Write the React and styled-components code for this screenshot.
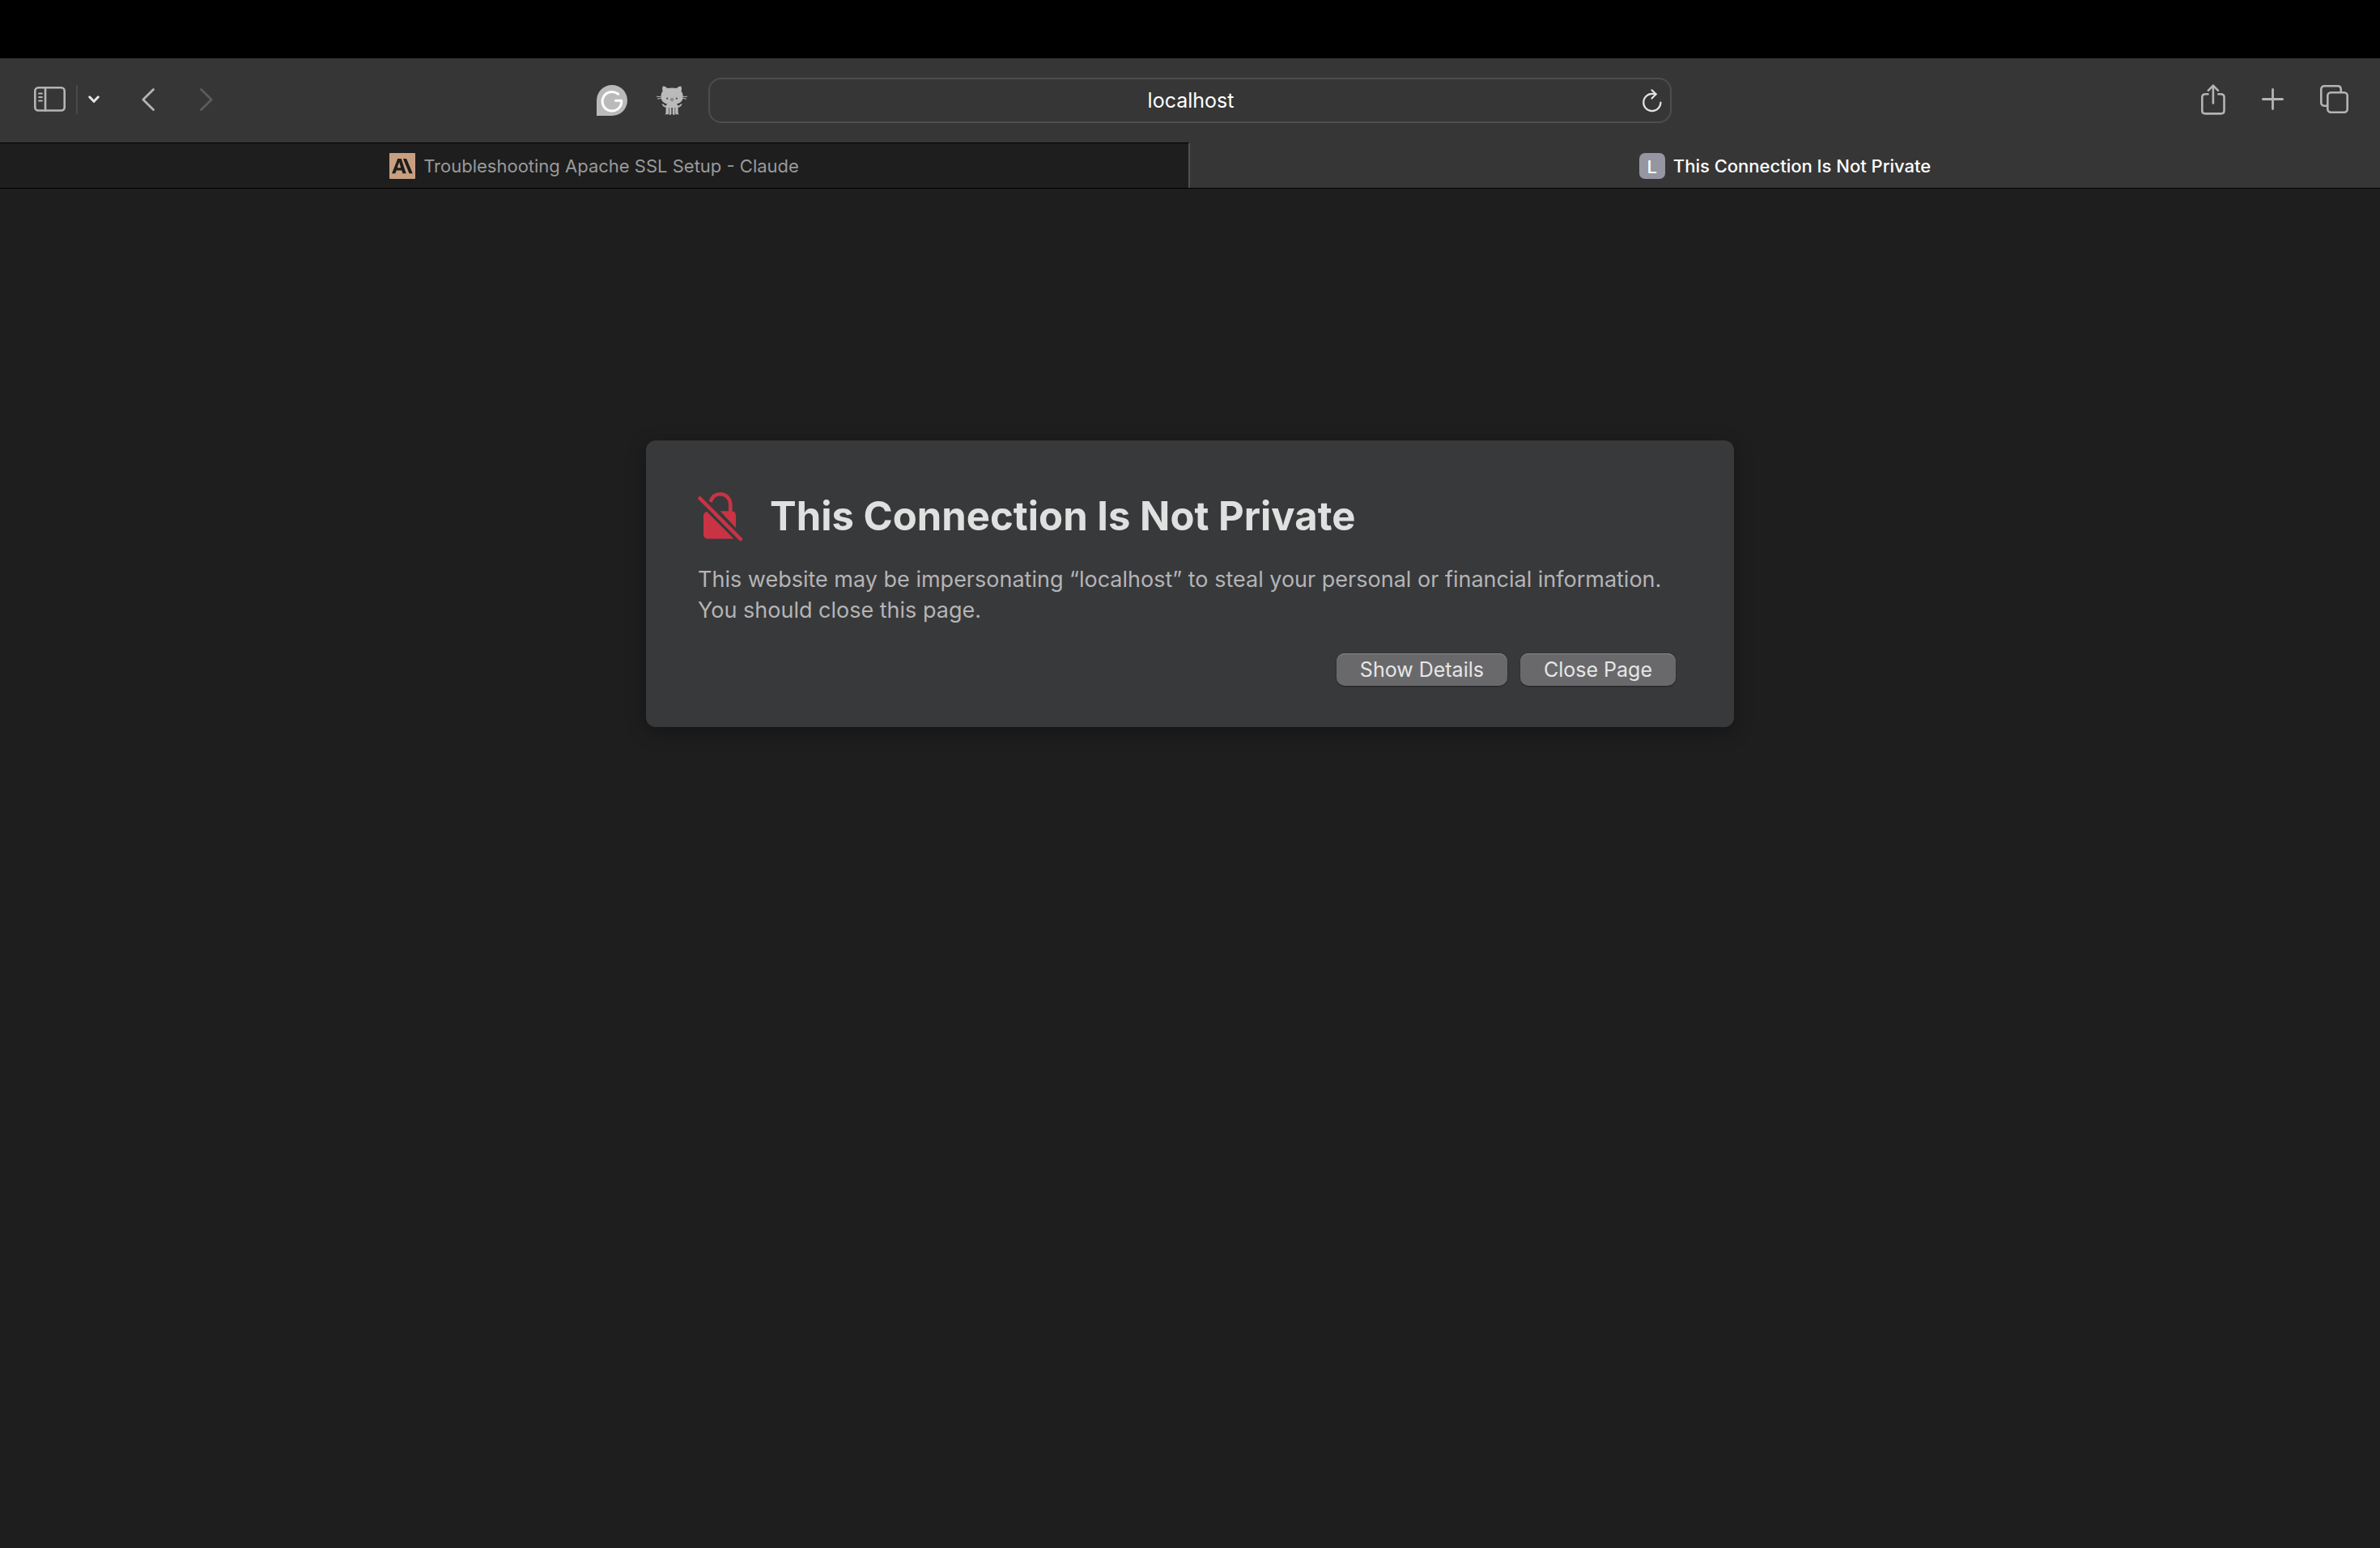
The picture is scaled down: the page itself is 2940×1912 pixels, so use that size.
import React from "react";
import styled, { createGlobalStyle } from "styled-components";

const GlobalStyle = createGlobalStyle`
  *, *::before, *::after { box-sizing: border-box; }
  body {
    margin: 0;
    background: #1e1e1e;
    font-family: Inter, "Liberation Sans", sans-serif;
  }
  button, input { font: inherit; color: inherit; }
`;

const Window = styled.div`
  min-height: 100vh;
  display: flex;
  flex-direction: column;
  background: #1e1e1e;
`;

const ScreenNotch = styled.div`
  height: 72px;
  background: #000;
`;

const Toolbar = styled.header`
  display: grid;
  grid-template-columns: 1fr minmax(0, 1190px) 1fr;
  align-items: center;
  height: 104px;
  background: #363636;
`;

const ToolbarStart = styled.div`
  display: flex;
  align-items: center;
  padding-left: 42px;
`;

const ToolGroup = styled.div`
  display: flex;
  align-items: center;
  justify-content: flex-end;
  flex: ${(p) => (p.$fill ? 1 : "none")};
  gap: ${(p) => p.$gap || 0}px;
  margin-right: ${(p) => p.$after || 0}px;
  padding-bottom: ${(p) => (p.$fill ? 0 : 3)}px;
`;

const IconButton = styled.button`
  display: flex;
  padding: 0;
  border: 0;
  background: none;
  color: ${(p) => p.$tone || "#b4b4b4"};

  svg { display: block; overflow: visible; }
`;

const Divider = styled.span`
  width: 2px;
  height: 36px;
  background: #494949;
`;

const AddressBar = styled.div`
  display: flex;
  align-items: center;
  height: 56px;
  padding: 0 10px;
  border: 2px solid #4d4d4d;
  border-radius: 16px;
`;

const AddressInput = styled.input`
  flex: 1;
  min-width: 0;
  height: 48px;
  padding: 0 0 0 26px;
  border: 0;
  outline: 0;
  background: transparent;
  color: #fff;
  font-size: 25px;
  text-align: center;
`;

const TabBar = styled.nav`
  display: grid;
  grid-template-columns: 1fr 1fr;
  height: 57px;
  border-bottom: 1px solid #000;
`;

const Tab = styled.button`
  display: flex;
  align-items: center;
  justify-content: center;
  gap: 10px;
  padding: 0;
  border: 0;
  border-top: 1px solid ${(p) => (p.$active ? "#363636" : "#000")};
  border-right: ${(p) => (p.$active ? "0" : "2px solid #505050")};
  background: ${(p) => (p.$active ? "#363636" : "#1e1e1e")};
  color: ${(p) => (p.$active ? "#fff" : "#9a9a9a")};
  font-size: 22px;
  font-weight: ${(p) => (p.$active ? 500 : 400)};
  line-height: 32px;

  svg { display: block; }
`;

const LetterIcon = styled.span`
  width: 32px;
  height: 32px;
  border-radius: 7px;
  background: #9696a2;
  color: #fff;
  font-size: 22px;
  font-weight: 500;
  line-height: 34px;
  text-align: center;
`;

const Page = styled.main`
  flex: 1;
  display: flex;
  align-items: flex-start;
  justify-content: center;
  padding: 311px 24px 24px;
`;

const Card = styled.section`
  width: 100%;
  max-width: 1344px;
  padding: 62px 72px 51px 64px;
  border-radius: 12px;
  background: #38393b;
  box-shadow: 0 6px 24px rgba(0, 0, 0, 0.3);
`;

const CardHeader = styled.div`
  display: flex;
  align-items: center;
  gap: 32px;

  svg { display: block; }
`;

const Title = styled.h1`
  margin: 0;
  color: #dfe0e0;
  font-size: 49px;
  font-weight: 700;
  line-height: 64px;
`;

const Message = styled.p`
  margin: 27px 0 0;
  color: #b4b4b6;
  font-size: 27px;
  line-height: 38px;
`;

const Actions = styled.div`
  display: flex;
  justify-content: flex-end;
  gap: 16px;
  margin-top: 34px;
`;

const PushButton = styled.button`
  height: 40px;
  padding: 0 29px;
  border: 0;
  border-radius: 10px;
  background: #69696b;
  box-shadow: inset 0 1px 0 #88888a, 0 1px 2px rgba(0, 0, 0, 0.4);
  color: #e6e6e6;
  font-size: 25px;
  line-height: 40px;
`;

const line = { fill: "none", stroke: "currentColor", strokeLinecap: "round", strokeLinejoin: "round" };

const SidebarIcon = () => (
  <svg width="39" height="31" viewBox="0 0 39 31" {...line} strokeWidth="2.6">
    <rect x="1.3" y="1.3" width="36.4" height="28.2" rx="4" />
    <path d="M14 1.5v28" />
    <path d="M6 8.5h4M6 13h4M6 17.5h4" strokeWidth="1.8" />
  </svg>
);

const MenuChevron = () => (
  <svg width="14" height="10" viewBox="0 0 14 10" {...line} strokeWidth="3">
    <path d="M1.7 1.8 7 7.3l5.300-5.500" />
  </svg>
);

const BackIcon = () => (
  <svg width="16" height="28" viewBox="0 0 16 28" {...line} strokeWidth="2.8">
    <path d="M14.500 1.500 1.800 14l12.700 12.500" />
  </svg>
);

const ForwardIcon = () => (
  <svg width="16" height="28" viewBox="0 0 16 28" {...line} strokeWidth="2.8">
    <path d="M1.500 1.500 14.200 14 1.500 26.500" />
  </svg>
);

const GrammarIcon = () => (
  <svg width="38" height="38" viewBox="0 0 38 38">
    <path d="M19 0a19 19 0 1 1 0 38H0V19A19 19 0 0 1 19 0z" fill="#bababa" />
    <path d="M26.500 11.200A11.800 11.800 0 1 0 30.700 19.300H23.500" fill="none" stroke="#fff" strokeWidth="3" strokeLinecap="round" strokeLinejoin="round" />
  </svg>
);

const OctocatIcon = () => (
  <svg width="38" height="36" viewBox="0 0 38 36">
    <path
      fill="#bababa"
      d="M7.800 .6C9.800 .3 12 1.700 13.400 3c3.600-.8 7.800-.8 11.400 0C26.200 1.700 28.400 .3 30.400 .6c.8 2.200 .8 4.400 .2 6.200 1.500 1.900 2.200 4 2.100 6.600-.2 5.200-3 8-7.900 8.900 1 .8 1.400 1.500 1.600 2.300 1.300-.1 2.200-.7 3.200-1.800l2-.6c-.5 2.500-2.500 4.300-5 4.500v6.600c0 1 .7 1.300 1.300 2h-3.800c-.8-.3-.9-1-.9-2V27h-.7v7.500c0 .8 .4 1 .6 1.300h-2.500c-.7-.4-.8-.9-.8-1.700V27h-1.400v7.100c0 .8-.1 1.300-.8 1.700h-2.500c.2-.3 .6-.5 .6-1.300V27H15v6.300c0 1-.1 1.700-.9 2h-3.800c.6-.7 1.300-1 1.300-2v-6.600c-2.500-.2-4.500-2-5-4.500l2 .6c1 1.100 1.900 1.700 3.200 1.800 .2-.8 .6-1.500 1.600-2.300-4.900-.9-7.700-3.700-7.900-8.900-.1-2.600 .6-4.700 2.100-6.600-.6-1.800-.6-4 .2-6.200z"
    />
    <path d="M0 13.200l5.400 .4M1 16.200l4.800-.8M38 13.200l-5.400 .4M37 16.200l-4.800-.8" stroke="#bababa" strokeWidth="1" />
    <circle cx="13.200" cy="15.600" r="1.200" fill="#555" />
    <circle cx="24.900" cy="15.600" r="1.200" fill="#555" />
    <circle cx="19.100" cy="17" r="1.500" fill="none" stroke="#555" strokeWidth=".8" />
  </svg>
);

const ReloadIcon = () => (
  <svg width="24" height="28" viewBox="0 0 24 28" {...line} strokeWidth="2.200">
    <path d="M22.400 16.500A10.600 10.600 0 1 1 11.800 5.900c1.800 0 3.500 .1 4.800 .4" />
    <path d="M11.500 1.300l5.100 5-5.100 5.200" />
  </svg>
);

const ShareIcon = () => (
  <svg width="30" height="38" viewBox="0 0 30 38" {...line} strokeWidth="2.600">
    <path d="M9.500 12.300H5.300c-2.400 0-4 1.400-4 3.700v16.500c0 2.400 1.600 3.900 4 3.900h19.200c2.400 0 4-1.500 4-3.900V16c0-2.300-1.600-3.700-4-3.700h-4.200" strokeLinecap="butt" />
    <path d="M14.900 23.500V2M8.800 7.900l6.100-6.200L21 7.900" />
  </svg>
);

const PlusIcon = () => (
  <svg width="27" height="27" viewBox="0 0 27 27" {...line} strokeWidth="2.800">
    <path d="M13.500 1.400v24.200M1.400 13.500h24.200" />
  </svg>
);

const TabsIcon = () => (
  <svg width="35" height="35" viewBox="0 0 35 35" {...line} strokeWidth="2.600">
    <rect x="9.300" y="9.300" width="24.400" height="24.400" rx="4" />
    <path d="M9 25.700H5.300c-2.500 0-4-1.500-4-4v-16.400c0-2.500 1.500-4 4-4h16.400c2.500 0 4 1.500 4 4V9" strokeLinecap="butt" />
  </svg>
);

const ClaudeIcon = () => (
  <svg width="32" height="32" viewBox="0 0 32 32">
    <rect width="32" height="32" rx="1" fill="#c89f81" />
    <path fill="#1e1e1c" fillRule="evenodd" d="M10.200 7h4.500l6 18.300h-4.200l-1.200-3.900H8.600l-1.200 3.900H3.100zM12.100 11.300 9.800 18.200h4.400z" />
    <path fill="#1e1e1c" d="M16.900 7h4.200l7.700 18.300h-4.200z" />
  </svg>
);

const BrokenLockIcon = () => (
  <svg width="57" height="62" viewBox="0 0 57 62" fill="none" stroke="#c93344">
    <path d="M15.500 13C17.500 6.500 22 3.200 27.500 3.200c7.500 0 12.800 5.500 12.800 13.800v9" strokeWidth="4.600" />
    <path d="M12.500 24.500 44.500 58.500H13c-4 0-6-2-6-6V31c0-3.500 1.800-6 5.500-6.500zM27.500 24.300H41c4 0 6 2 6 6v15z" fill="#c93344" stroke="none" />
    <path d="M2.600 8.500 52.800 58.800" stroke="#38393b" strokeWidth="11" />
    <path d="M2.600 8.500 52.800 58.800" strokeWidth="4.600" strokeLinecap="round" />
  </svg>
);

export default function App() {
  return (
    <Window>
      <GlobalStyle />
      <ScreenNotch />
      <Toolbar>
        <ToolbarStart>
          <ToolGroup $gap={13} $after={52}>
            <IconButton aria-label="Show sidebar"><SidebarIcon /></IconButton>
            <Divider />
            <IconButton aria-label="Tab groups" $tone="#e6e6e6"><MenuChevron /></IconButton>
          </ToolGroup>
          <ToolGroup $gap={56}>
            <IconButton aria-label="Back"><BackIcon /></IconButton>
            <IconButton aria-label="Forward" $tone="#5c5c5c" disabled><ForwardIcon /></IconButton>
          </ToolGroup>
          <ToolGroup $fill $gap={36} $after={26}>
            <IconButton aria-label="Grammarly"><GrammarIcon /></IconButton>
            <IconButton aria-label="Octocat extension"><OctocatIcon /></IconButton>
          </ToolGroup>
        </ToolbarStart>
        <AddressBar>
          <AddressInput type="text" aria-label="Address" defaultValue="localhost" />
          <IconButton aria-label="Reload page" $tone="#e2e2e2"><ReloadIcon /></IconButton>
        </AddressBar>
        <ToolGroup $gap={45} $after={39}>
          <IconButton aria-label="Share"><ShareIcon /></IconButton>
          <IconButton aria-label="New tab"><PlusIcon /></IconButton>
          <IconButton aria-label="Tab overview"><TabsIcon /></IconButton>
        </ToolGroup>
      </Toolbar>
      <TabBar>
        <Tab>
          <ClaudeIcon />
          Troubleshooting Apache SSL Setup - Claude
        </Tab>
        <Tab $active aria-current="page">
          <LetterIcon aria-hidden="true">L</LetterIcon>
          This Connection Is Not Private
        </Tab>
      </TabBar>
      <Page>
        <Card>
          <CardHeader>
            <BrokenLockIcon />
            <Title>This Connection Is Not Private</Title>
          </CardHeader>
          <Message>
            This website may be impersonating “localhost” to steal your personal or financial information. You should
            close this page.
          </Message>
          <Actions>
            <PushButton>Show Details</PushButton>
            <PushButton>Close Page</PushButton>
          </Actions>
        </Card>
      </Page>
    </Window>
  );
}
